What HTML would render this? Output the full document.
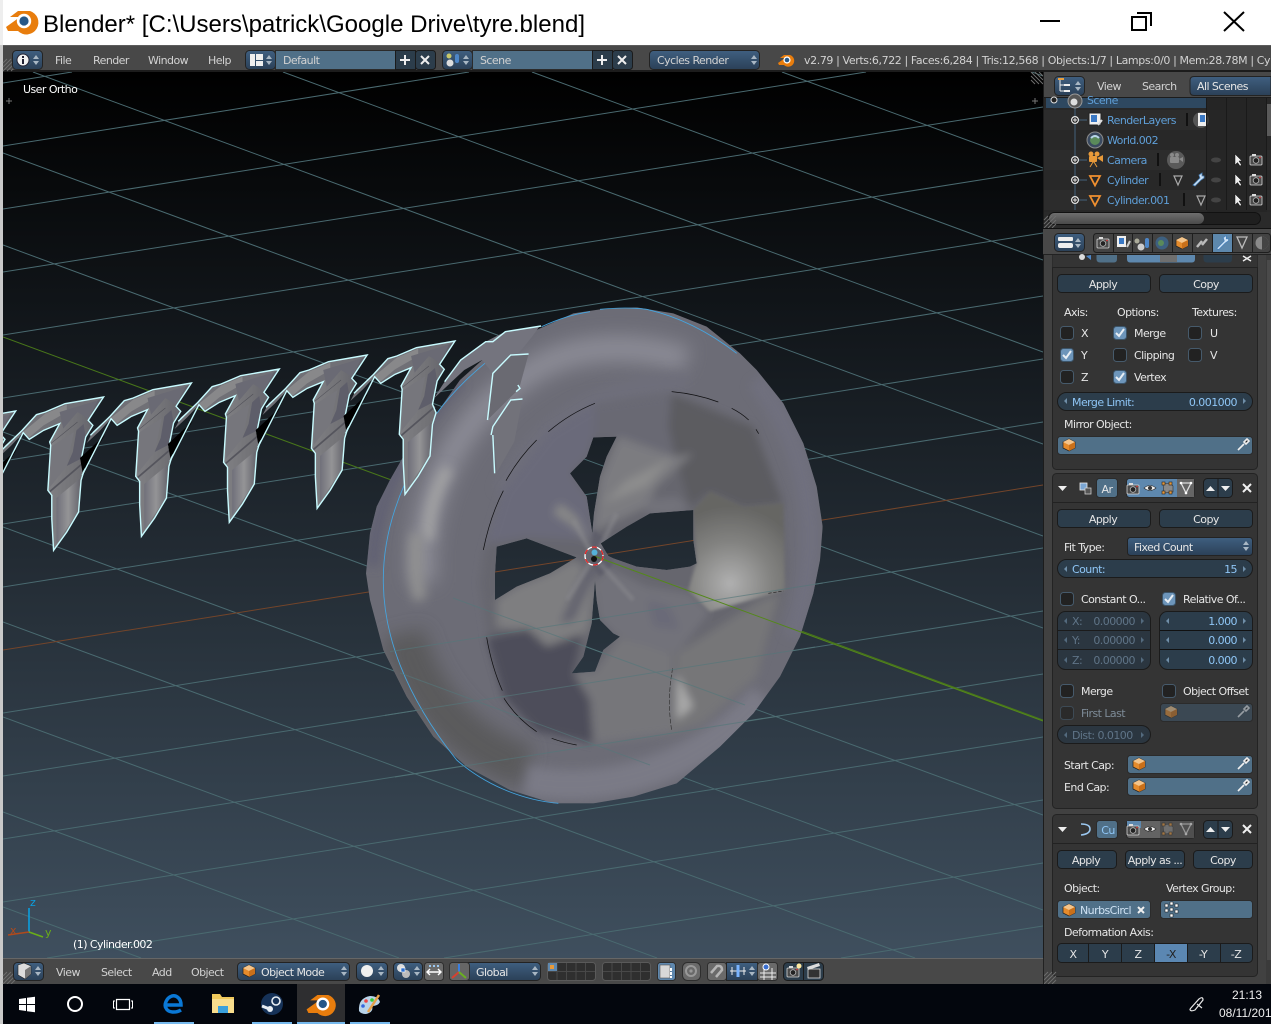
<!DOCTYPE html>
<html><head><meta charset="utf-8"><title>Blender</title>
<style>
html,body{margin:0;padding:0;background:#fff;overflow:hidden;width:1271px;height:1024px}
svg{display:block}
text{font-family:"DejaVu Sans",sans-serif;font-size:11px;letter-spacing:-.55px;fill:#dcdcdc}
.h{fill:#d2d2d2}
.l{fill:#e6e6e6}
.c{text-anchor:middle}
.r{text-anchor:end}
.n{fill:#8fc6f6}
.o{fill:#5f9fd8}
.d{fill:#7d8b97}
.dn{fill:#5f7487}
.w{fill:#fff}
.bt{fill:#2c3d4b;stroke:#1b1b1b}
.fd{fill:#507088;stroke:#2b2b2b}
.ds{fill:#3b4853;stroke:#2b2b2b}
.mn{fill:url(#gm);stroke:#232323}
.ck{fill:#222;stroke:#465a6b}
.cd{fill:#6d95ba;stroke:#3c5468}
.pn{fill:#343434;stroke:#232323}
.ln{stroke:#4a6a70;stroke-width:1;fill:none}
.gy{fill:#6a6a6a;stroke:#2e2e2e}
</style></head><body>
<svg xmlns="http://www.w3.org/2000/svg" width="1271" height="1024" viewBox="0 0 1271 1024">
<defs>
<linearGradient id="gm" x1="0" y1="0" x2="0" y2="1"><stop offset="0" stop-color="#3f5f80"/><stop offset="1" stop-color="#2b4057"/></linearGradient>
<linearGradient id="gv" x1="0" y1="72" x2="0" y2="958" gradientUnits="userSpaceOnUse"><stop offset="0" stop-color="#000"/><stop offset="1" stop-color="#3f4f5e"/></linearGradient>
<linearGradient id="gs" x1="0" y1="0" x2="0" y2="1"><stop offset="0" stop-color="#6e6e6e"/><stop offset="1" stop-color="#4a4a4a"/></linearGradient>
<linearGradient id="gt" x1="0" y1="0" x2="1" y2="0"><stop offset="0" stop-color="#808084"/><stop offset=".5" stop-color="#727276"/><stop offset="1" stop-color="#5c5c66"/></linearGradient>
<linearGradient id="gl" x1="0" y1="0" x2="1" y2="0"><stop offset="0" stop-color="#70707a"/><stop offset=".5" stop-color="#949496"/><stop offset="1" stop-color="#66666e"/></linearGradient>
<radialGradient id="gw" gradientUnits="userSpaceOnUse" cx="1110" cy="850" r="230"><stop offset="0" stop-color="#b0b0b0"/><stop offset=".55" stop-color="#828280"/><stop offset="1" stop-color="#666664"/></radialGradient>
<filter id="b0" filterUnits="userSpaceOnUse" x="-200" y="-200" width="1900" height="2000"><feGaussianBlur stdDeviation="5"/></filter>
<filter id="b1" filterUnits="userSpaceOnUse" x="-200" y="-200" width="1900" height="2000"><feGaussianBlur stdDeviation="13"/></filter>
<filter id="b2" filterUnits="userSpaceOnUse" x="-200" y="-200" width="1900" height="2000"><feGaussianBlur stdDeviation="16"/></filter>
<filter id="b3" filterUnits="userSpaceOnUse" x="-200" y="-200" width="1900" height="2000"><feGaussianBlur stdDeviation="28"/></filter>
<clipPath id="wc"><path clip-rule="evenodd" d="M540,85 L640,40 L720,28 L830,22 L940,40 L1040,80 L1140,160 L1190,210 L1270,310 L1330,430 L1370,560 L1388,680 L1380,780 L1360,880 L1320,1010 L1260,1130 L1180,1240 L1080,1340 L950,1450 L820,1490 L700,1510 L580,1510 L450,1470 L320,1400 L220,1310 L140,1190 L70,1050 L30,900 L18,820 L30,700 L50,620 L90,540 L130,470 L150,440 L230,340 L300,240 L400,150 Z
M700,412 L770,410 L740,470 L720,530 L702,640 L697,700 L680,590 L630,520 L680,470 Z
M722,730 L800,680 L870,640 L1000,630 L1000,720 L1010,790 L990,800 L920,810 L830,800 L760,775 L745,768 Z
M650,772 L500,715 L410,740 L405,820 L405,900 L470,860 L570,820 Z
M705,840 L710,900 L720,960 L760,1000 L780,1010 L730,1050 L705,1115 L635,1120 L670,1070 L695,970 Z"/></clipPath>
<g id="ud"><path d="M-3,-1 L0,-5 L3,-1Z M-3,1 L0,5 L3,1Z" fill="#a9b7c4"/></g>
<path id="al" d="M2,-3 L-1,0 L2,3Z" fill="#6f8ea8"/>
<path id="ar" d="M-2,-3 L1,0 L-2,3Z" fill="#6f8ea8"/>
<path id="tk" d="M3,7 L6,10 L11,3" fill="none" stroke="#e8eef4" stroke-width="2"/>
<g id="cube"><path d="M0,-6 L6,-3 L6,3 L0,6 L-6,3 L-6,-3Z" fill="#e58b2c" stroke="#222" stroke-width=".7"/><path d="M0,-6 L6,-3 L0,0 L-6,-3Z" fill="#f4c48a"/><path d="M0,0 L6,-3 L6,3 L0,6Z" fill="#c9701a"/></g>
<g id="dr"><path d="M-5,5 L1,-1 M1,-3 L4,-6 L6,-4 L3,-1Z" stroke="#f0f0f0" stroke-width="1.600" fill="#222"/></g>
<g id="plus"><circle r="3.400" fill="#222" stroke="#e8e8e8" stroke-width="1.200"/><path d="M-2,0H2M0,-2V2" stroke="#e8e8e8"/></g>
<g id="cam"><rect x="-6" y="-4" width="12" height="9" rx="1" fill="#4a4a4a" stroke="#d8d8d8" stroke-width=".8"/><rect x="-4" y="-6" width="4" height="2" fill="#ddd"/><circle cy=".5" r="2.800" fill="#222" stroke="#bbb" stroke-width=".8"/><circle cx="4" cy="-2.500" r=".8" fill="#e33"/></g>
<g id="eye"><path d="M-6,0 Q0,-5 6,0 Q0,5 -6,0Z" fill="#eee" stroke="#222" stroke-width=".6"/><circle r="2" fill="#333"/></g>
<g id="edt"><path d="M-5,-4 L2,-5 L5,-2 L5,4 L-4,5Z" fill="#8a8a8a" stroke="#333" stroke-width=".6"/><g fill="#e5973a" stroke="#222" stroke-width=".6"><rect x="-6" y="-6" width="3" height="3"/><rect x="1" y="-6" width="3" height="3"/><rect x="-6" y="3" width="3" height="3"/><rect x="1" y="3" width="3" height="3"/></g></g>
<g id="cag"><path d="M-5,-5 L5,-5 L0,5Z" fill="none" stroke="#ddd" stroke-width="1.300"/><circle cx="-5" cy="-5" r="1.300" fill="#fff"/><circle cx="5" cy="-5" r="1.300" fill="#fff"/><circle cy="5" r="1.300" fill="#fff"/></g>
<g id="tri"><path d="M-5,-4 L5,-4 L0,5.500Z" fill="none" stroke="#f09030" stroke-width="1.800"/></g>
<g id="tri2"><path d="M-4,-4 L4,-4 L0,5Z" fill="none" stroke="#a9a9a9" stroke-width="1.200"/></g>
<g id="wr"><path d="M-5,6 L2,-1 L1,-4 L4,-6 L4,-3 L6,-3 L6,-1 L3,1 L-3,7Z" fill="#cfe3f6" stroke="#4c82b8" stroke-width=".8"/></g>
<g id="logo"><path d="M-8,3 L-1,-2 L-6,-2 L-2,-5 L4,-5 A6,6 0 1 1 -2,5 L-7,5Z" fill="#e87d0d"/><circle cx="1" cy="0" r="3.600" fill="#fff"/><circle cx="1" cy="0" r="2.300" fill="#265787"/></g>
<g id="st"><path d="M0,12 L12,0 M0,8 L8,0 M0,4 L4,0 M4,12 L12,4 M8,12 L12,8" stroke="#6e6e6e" fill="none"/></g>

<g id="tooth">
<polygon points="785,262 716,330 723,372" fill="#000"/>
<polygon points="735,285 752,250 800,205 840,158 865,150 920,125 1028,105 985,175 905,185 860,205 820,232 803,212 770,250" fill="#707076"/>
<polygon points="800,212 865,155 925,128 925,150 860,190 820,226" fill="#88888a"/>
<polygon points="1028,105 985,175 998,190 978,225 965,295 975,320 965,355 958,450 925,510 888,565 883,470 883,400 872,385 880,250 877,240 905,185" fill="url(#gt)"/>
<polygon points="905,150 1012,115 985,170 955,150 915,200" fill="#6a6a74"/>
<polygon points="972,186 952,205 942,270 925,312 965,290 978,225" fill="#5e5e6a"/>
<polygon points="896,408 962,350 955,450 925,500 896,545" fill="url(#gl)"/>
<polygon points="945,210 880,255 878,375 925,312" fill="#76767c"/>
<path d="M874,392 L972,302" stroke="#55555d" stroke-width="5" fill="none"/>
<path d="M880,245 L955,180" stroke="#4f4f57" stroke-width="1.500" fill="none"/>
<polyline points="745,262 800,205 840,158 865,150 920,125 1028,105 985,175 998,190 978,225 965,295 975,320 965,355 958,450 925,510 888,565 883,470 883,400 872,385 880,250 877,240 905,185 860,205 820,232 803,212 722,382" fill="none" stroke="#c8fbff" stroke-width="1.400" vector-effect="non-scaling-stroke"/>
</g>
</defs>

<!-- title bar -->
<rect width="1271" height="1024" fill="#fff"/>
<rect x="0" y="0" width="3" height="45" fill="#eeeeee"/>
<use href="#logo" transform="translate(22,21) scale(2)"/>
<text x="43" y="32" style='font-family:"Liberation Sans",sans-serif;font-size:24px;letter-spacing:0;fill:#000' textLength="542" lengthAdjust="spacingAndGlyphs">Blender* [C:\Users\patrick\Google Drive\tyre.blend]</text>
<path d="M1040,21 H1060" stroke="#000" stroke-width="2"/>
<path d="M1137,13 H1151 V26 M1132,17 H1146 V30 H1132Z" fill="none" stroke="#000" stroke-width="2"/>
<path d="M1224,12 L1244,31 M1244,12 L1224,31" stroke="#000" stroke-width="2"/>

<rect x="0" y="45" width="1271" height="979" fill="#3f3f3f"/>
<rect x="0" y="45" width="3" height="979" fill="#c9c9c9"/>

<!-- top header -->
<rect x="3" y="45" width="1268" height="26" fill="#484848"/>
<rect x="3" y="45" width="1268" height="1" fill="#5c5c5c"/>
<rect x="3" y="70" width="1268" height="2" fill="#1c1c1c"/>
<use href="#st" x="3" y="59"/>
<rect x="12.500" y="50.500" width="30" height="19" rx="4" class="mn"/>
<circle cx="23" cy="60" r="6" fill="#f2f2f2" stroke="#223" stroke-width="1"/>
<rect x="22" y="59" width="2" height="5" fill="#223"/><rect x="22" y="56" width="2" height="2" fill="#223"/>
<use href="#ud" x="36" y="60"/>
<text x="55" y="64" class="h">File</text>
<text x="93" y="64" class="h">Render</text>
<text x="148" y="64" class="h">Window</text>
<text x="208" y="64" class="h">Help</text>
<rect x="245.500" y="50.500" width="30" height="19" rx="4" class="mn"/>
<rect x="250" y="54" width="5" height="12" fill="#eee"/><rect x="256" y="54" width="7" height="6" fill="#eee"/><rect x="256" y="61" width="7" height="5" fill="#eee"/>
<use href="#ud" x="269" y="60"/>
<rect x="275.500" y="50.500" width="120" height="19" class="fd"/>
<text x="283" y="64" class="h">Default</text>
<rect x="395.500" y="50.500" width="20" height="19" fill="#2c3d4b" stroke="#1b1b1b"/>
<rect x="415.500" y="50.500" width="20" height="19" rx="3" fill="#2c3d4b" stroke="#1b1b1b"/>
<path d="M400,60 H410 M405,55 V65" stroke="#eee" stroke-width="2"/>
<path d="M421,56 L429,64 M429,56 L421,64" stroke="#eee" stroke-width="2"/>
<rect x="442.500" y="50.500" width="30" height="19" rx="4" class="mn"/>
<circle cx="449" cy="56" r="2.500" fill="#c8c86a"/><circle cx="450" cy="63" r="3.500" fill="#ddd"/><rect x="455" y="54" width="4" height="9" rx="2" fill="#4d86c8"/>
<use href="#ud" x="466" y="60"/>
<rect x="472.500" y="50.500" width="120" height="19" class="fd"/>
<text x="480" y="64" class="h">Scene</text>
<rect x="592.500" y="50.500" width="20" height="19" fill="#2c3d4b" stroke="#1b1b1b"/>
<rect x="612.500" y="50.500" width="20" height="19" rx="3" fill="#2c3d4b" stroke="#1b1b1b"/>
<path d="M597,60 H607 M602,55 V65" stroke="#eee" stroke-width="2"/>
<path d="M618,56 L626,64 M626,56 L618,64" stroke="#eee" stroke-width="2"/>
<rect x="649.500" y="50.500" width="110" height="19" rx="4" class="mn"/>
<text x="657" y="64" class="h">Cycles Render</text>
<use href="#ud" x="754" y="60"/>
<use href="#logo" x="786" y="60"/>
<text x="804" y="64" class="h" textLength="466">v2.79 | Verts:6,722 | Faces:6,284 | Tris:12,568 | Objects:1/7 | Lamps:0/0 | Mem:28.78M | Cy</text>

<!-- 3D viewport -->
<svg x="3" y="72" width="1040" height="886" viewBox="3 72 1040 886">
<rect x="3" y="72" width="1040" height="886" fill="url(#gv)"/>
<g class="ln">
<path d="M3,83L72,72M3,146L469,72M3,209L866,72M3,272L1043,107M3,335L1043,170M3,398L1043,233M3,461L1043,296M3,524L1043,359M3,587L1043,422M3,713L1043,548M3,776L1043,611M3,839L1043,674M3,902L1043,737M47,958L1043,800M444,958L1043,863M841,958L1043,926"/>
<path d="M3,432L1043,815M3,527L1043,910M3,622L915,958M3,717L657,958M3,812L399,958M3,907L141,958M3,245L1043,628M3,153L1043,536M33,72L1043,444M283,72L1043,352M532,72L1043,260M782,72L1043,168M1032,72L1043,76"/>
</g>
<path d="M3,650L1043,485" stroke="#74452a" stroke-width="1"/>
<path d="M3,337L1043,720" stroke="#48761a" stroke-width="1"/>

<!-- wheel -->
<g transform="translate(360,300) scale(.33333)">
<g clip-path="url(#wc)">
<rect x="0" y="0" width="1410" height="1530" fill="#6c6c76"/>
<path d="M130,1000 C170,1170 300,1340 500,1400" stroke="#5a5a5c" stroke-width="130" fill="none" filter="url(#b3)"/>
<path d="M190,850 C170,620 270,360 520,210 C650,130 830,130 980,180" stroke="#8a8a94" stroke-width="80" fill="none" filter="url(#b3)"/>
<path d="M205,720 C205,640 225,570 265,505" stroke="#a5a5a5" stroke-width="32" fill="none" filter="url(#b2)"/>
<path d="M170,700 C165,780 165,840 180,900" stroke="#919191" stroke-width="40" fill="none" filter="url(#b2)"/>
<path d="M500,1440 C720,1490 1020,1410 1210,1190" stroke="#7a7a86" stroke-width="90" fill="none" filter="url(#b2)"/>
<path d="M1190,240 C1340,430 1400,700 1300,1010" stroke="#70707e" stroke-width="60" fill="none" filter="url(#b2)"/>
<path d="M40,800 C40,600 160,380 300,240" stroke="#5e5e72" stroke-width="34" fill="none" filter="url(#b2)"/>
<path d="M430,580 C500,400 720,240 980,250" stroke="#6e6e7a" stroke-width="60" fill="none" filter="url(#b2)"/>
<!-- inner -->
<g filter="url(#b1)">
<polygon points="360,850 372,760 430,570 565,395 705,310 935,280 1180,380 1270,610 1280,800 1270,900 1190,1130 1030,1270 930,1300 700,1330 530,1295 430,1190 385,1020" fill="#66666e"/>
<polygon points="935,280 1180,380 1270,610 1150,620 1050,575 990,620 945,470 925,380" fill="#5c5c60"/>
<polygon points="705,310 935,280 925,380 945,470 770,410 700,410" fill="#696973"/>
<polygon points="775,410 945,470 1000,460 890,560 860,620 700,695 720,540" fill="#7c7c80"/>
<polygon points="800,540 940,470 860,560 730,610" fill="#8d8d8d"/>
<polygon points="860,600 950,590 990,625 930,650 860,640" fill="#72727a"/>
<polygon points="705,310 700,410 680,470 630,520 690,600 695,720 500,710 380,730 430,570 565,395" fill="#6a6a7a"/>
<polygon points="580,640 600,610 650,650 690,730 640,680" fill="#888888"/>
<polygon points="640,780 705,820 690,970 650,1070 560,1040 520,1000 410,980 410,900 470,860 570,820" fill="#7e7e80"/>
<polygon points="680,800 705,820 640,960 600,970" fill="#61616d"/>
<polygon points="380,1015 500,985 560,1040 670,1000 640,1120 700,1200 700,1330 530,1295 430,1190" fill="#4e4e5a"/>
<polygon points="640,1120 705,1115 780,1010 870,1040 940,1060 935,1300 700,1330 690,1200" fill="#76767a"/>
<polygon points="740,800 860,860 990,880 1050,935 1030,960 950,1060 870,1040 760,1000 715,950 705,850" fill="#72727a"/>
<polygon points="860,900 930,920 960,990 880,980" fill="#6a6a78"/>
<polygon points="950,1060 1200,900 1260,880 1190,1130 1030,1270 935,1300" fill="#767678"/>
<polygon points="950,1120 1000,1220 950,1260" fill="#a8a8a8"/>
</g>
<polygon points="1000,630 1050,575 1150,620 1270,610 1275,870 1050,935 985,870 1005,800 1010,790" fill="url(#gw)" filter="url(#b0)"/>
<g fill="#5f5f6a" filter="url(#b0)"><polygon points="740,720 700,690 690,790 720,830 760,790"/></g>
<path d="M720,745 L770,640 M690,750 L640,660 M690,790 L620,900 M720,790 L820,900" stroke="#8b8b90" stroke-width="14" filter="url(#b0)" opacity=".5"/>
</g>
<!-- black cracks -->
<g fill="none" stroke="#000" stroke-width="2.200" opacity=".85">
<path d="M565,395 Q630,340 705,310"/><path d="M530,420 Q475,475 438,542"/><path d="M430,572 Q390,650 370,750"/><path d="M380,1012 Q395,1100 427,1172"/><path d="M432,1195 Q470,1255 530,1295"/><path d="M575,1315 Q610,1328 650,1335"/><path d="M935,275 Q1010,282 1075,306"/><path d="M1115,325 Q1145,340 1166,360"/><path d="M1188,388 L1196,401"/>
</g>
<path d="M938,1105 Q920,1200 935,1290" stroke="#333" stroke-width="2" fill="none" stroke-dasharray="14 5"/>
<path d="M1225,880 L1270,873" stroke="#222" stroke-width="2" stroke-dasharray="10 5"/>
<!-- blue circle arcs -->
<g fill="none" stroke="#45a5e0" stroke-width="2.600">
<path d="M135,550 C95,640 68,740 70,850 C72,1000 130,1180 290,1380 C370,1450 480,1500 595,1510"/>
<path d="M230,340 C290,260 350,210 410,160"/><path d="M545,80 Q620,45 690,35"/><path d="M720,28 Q800,20 860,28 Q1000,60 1130,160"/>
</g>
</g>

<!-- overlaid faint lines -->
<g stroke="#55777a" stroke-width="1" opacity=".65" fill="none">
<path d="M390,651.600L823,583M385,715.400L815,647M395,777L780,716"/>
<path d="M453,598L745,705M400,673L650,765"/>
</g>
<path d="M594,556L1043,721" stroke="#54881a" stroke-width="1"/>

<!-- teeth -->
<g transform="translate(0,320) scale(.35714,.33333)">
<use href="#tooth" transform="translate(-984,168)"/>
<use href="#tooth" transform="translate(-738,126)"/>
<use href="#tooth" transform="translate(-492,84)"/>
<use href="#tooth" transform="translate(-246,42)"/>
<use href="#tooth"/>
<use href="#tooth" transform="translate(246,-42)"/>
<polygon points="1215,235 1245,185 1290,120 1360,65 1415,35 1510,20 1490,50 1460,90 1380,160 1350,120 1300,150" fill="#74747e"/>
<polygon points="1380,160 1430,105 1480,102 1455,200 1450,210 1365,300" fill="#6a6a72"/>
<polygon points="1380,320 1430,240 1463,237 1440,365 1392,455 1385,370" fill="#72727a"/>
<g fill="none" stroke="#c8fbff" stroke-width="1.400">
<polyline vector-effect="non-scaling-stroke" points="1245,185 1290,120 1360,65 1380,65 1415,35 1515,18"/>
<polyline vector-effect="non-scaling-stroke" points="1365,300 1380,160 1430,105 1480,102"/>
<polyline vector-effect="non-scaling-stroke" points="1450,195 1456,205 1445,215"/>
<polyline vector-effect="non-scaling-stroke" points="1375,345 1380,320 1430,240 1463,237"/>
<polyline vector-effect="non-scaling-stroke" points="1385,460 1380,345"/>
</g>
</g>

<!-- 3D cursor -->
<circle cx="594" cy="556" r="9" fill="none" stroke="#fff" stroke-width="1.300"/>
<circle cx="594" cy="556" r="9" fill="none" stroke="#e02020" stroke-width="1.300" stroke-dasharray="5 5"/>
<circle cx="594.500" cy="552.500" r="3" fill="#55b0d8"/>
<circle cx="594" cy="559" r="3" fill="#111"/>

<text x="23" y="93" class="w">User Ortho</text>
<text x="73" y="948" class="w">(1) Cylinder.002</text>
<path d="M29,932 V908" stroke="#0a9fe0" stroke-width="1.600"/>
<path d="M29,932 L8,935" stroke="#b04a1c" stroke-width="1.600"/>
<path d="M29,932 L43,937" stroke="#6aae18" stroke-width="1.600"/>
<text x="30" y="906" style="fill:#0a9fe0">z</text>
<text x="10" y="934" style="fill:#b04a1c">x</text>
<text x="45" y="936" style="fill:#6aae18">y</text>
<path d="M6,101H12M9,98V104M1032,101H1038M1035,98V104" stroke="#777"/>
<use href="#st" x="1031" y="72" transform="rotate(90 1037 78)"/>
</svg>

<!-- outliner -->
<rect x="1043" y="72" width="228" height="156" fill="#2a2a2a"/>
<rect x="1044" y="98" width="227" height="114" fill="#282828"/>
<rect x="1044" y="110" width="227" height="20" fill="#2c2c2c"/>
<rect x="1044" y="150" width="227" height="20" fill="#2c2c2c"/>
<rect x="1044" y="190" width="227" height="20" fill="#2c2c2c"/>
<rect x="1046" y="98" width="161" height="10" fill="#2e4860"/>
<rect x="1043" y="72" width="228" height="26" fill="#484848"/>
<rect x="1043" y="97" width="228" height="1" fill="#1c1c1c"/>
<rect x="1043" y="72" width="1" height="156" fill="#1c1c1c"/>
<rect x="1054.500" y="76.500" width="30" height="19" rx="4" class="mn"/>
<rect x="1058" y="78" width="6" height="2" fill="#e8a040"/><path d="M1060,80 V91 M1060,85 H1064 M1060,91 H1064" stroke="#eee"/><rect x="1064" y="84" width="6" height="2" fill="#eee"/><rect x="1064" y="90" width="6" height="2" fill="#eee"/>
<use href="#ud" x="1078" y="86"/>
<text x="1097" y="90" class="h">View</text>
<text x="1142" y="90" class="h">Search</text>
<path d="M1194,76.500 H1271 V95.500 H1194 Q1190,95.500 1190,91.500 V80.500 Q1190,76.500 1194,76.500Z" fill="url(#gm)" stroke="#232323"/>
<text x="1197" y="90" class="l">All Scenes</text>

<path d="M1075,104 V210" stroke="#44627d"/>
<path d="M1078,120H1087M1078,160H1087M1078,180H1087M1078,200H1087" stroke="#44627d"/>
<circle cx="1054" cy="100" r="3" fill="#222" stroke="#ddd"/>
<circle cx="1075" cy="101" r="7" fill="#555" stroke="#999"/><circle cx="1074" cy="102" r="3.500" fill="#ddd"/>
<text x="1087" y="104" class="o">Scene</text>
<use href="#plus" x="1075" y="120"/><use href="#plus" x="1075" y="160"/><use href="#plus" x="1075" y="180"/><use href="#plus" x="1075" y="200"/>
<rect x="1089" y="113" width="12" height="12" fill="#f0f0f0" stroke="#222"/><rect x="1091" y="115" width="6" height="7" fill="#3a78c4"/><path d="M1098,125 L1102,120" stroke="#ddd" stroke-width="2"/>
<text x="1107" y="124" class="o">RenderLayers</text>
<rect x="1186" y="113" width="2" height="13" fill="#111"/>
<circle cx="1201" cy="120" r="8" fill="#555"/><rect x="1198" y="113" width="9" height="13" fill="#eee"/><rect x="1200" y="115" width="5" height="7" fill="#3a78c4"/>
<circle cx="1095" cy="140" r="8" fill="#3a4a60" stroke="#8a8a8a"/><circle cx="1095" cy="140" r="5" fill="#5a8a5a"/><path d="M1091,138 Q1095,134 1099,138" stroke="#b8d4e8" stroke-width="2" fill="none"/>
<text x="1107" y="144" class="o">World.002</text>
<g fill="#e89a3a"><rect x="1089" y="156" width="8" height="6" rx="1"/><circle cx="1091" cy="154" r="2.500"/><circle cx="1097" cy="154" r="2.500"/><path d="M1097,158 L1103,155 V162Z"/><path d="M1090,167 L1093,162 H1094 L1097,167" fill="none" stroke="#e89a3a"/></g>
<text x="1107" y="164" class="o">Camera</text>
<rect x="1157" y="153" width="2" height="13" fill="#111"/>
<circle cx="1176" cy="160" r="9" fill="#5a5a5a"/><g fill="#8a8a8a"><rect x="1170" y="157" width="9" height="6" rx="1"/><circle cx="1172" cy="155" r="2"/><circle cx="1177" cy="155" r="2"/><path d="M1179,159 L1183,157 V162Z"/></g>
<use href="#tri" x="1095" y="180"/>
<text x="1107" y="184" class="o">Cylinder</text>
<rect x="1159" y="173" width="2" height="13" fill="#111"/>
<use href="#tri2" x="1178" y="180"/>
<use href="#wr" x="1198" y="179"/>
<use href="#tri" x="1095" y="200"/>
<text x="1107" y="204" class="o">Cylinder.001</text>
<rect x="1183" y="193" width="2" height="13" fill="#111"/>
<use href="#tri2" x="1201" y="200"/>
<rect x="1207" y="98" width="60" height="114" fill="#222" opacity=".55"/>
<path d="M1206.500,98V210M1226.500,98V210M1246.500,98V210M1266.500,98V210" stroke="#1a1a1a"/>
<g fill="#444"><ellipse cx="1216" cy="160" rx="5" ry="2.500"/><ellipse cx="1216" cy="180" rx="5" ry="2.500"/><ellipse cx="1216" cy="200" rx="5" ry="2.500"/></g>
<g fill="#eee" stroke="#111" stroke-width=".5"><path d="M1235,154 L1235,165 L1237.500,162.500 L1240,166 L1241.500,165 L1239,161 L1242,161Z"/><path d="M1235,174 L1235,185 L1237.500,182.500 L1240,186 L1241.500,185 L1239,181 L1242,181Z"/><path d="M1235,194 L1235,205 L1237.500,202.500 L1240,206 L1241.500,205 L1239,201 L1242,201Z"/></g>
<use href="#cam" x="1256" y="160"/><use href="#cam" x="1256" y="180"/><use href="#cam" x="1256" y="200"/>
<rect x="1267" y="104" width="4" height="32" fill="#5a5a5a"/>
<rect x="1048.500" y="212.500" width="212" height="12" rx="6" fill="#1f1f1f" stroke="#111"/>
<rect x="1049" y="213" width="155" height="11" rx="5.500" fill="url(#gs)"/>
<use href="#st" x="1044" y="216"/>
<rect x="1043" y="228" width="228" height="1" fill="#111"/>

<!-- properties -->
<rect x="1043" y="229" width="228" height="755" fill="#414141"/>
<rect x="1043" y="229" width="1" height="755" fill="#1c1c1c"/>
<rect x="1266" y="229" width="5" height="755" fill="#3a3a3a"/>
<rect x="1052.500" y="248.500" width="205" height="221" rx="4" class="pn"/>
<rect x="1043" y="229" width="228" height="26" fill="#484848"/>
<rect x="1043" y="254" width="228" height="1" fill="#222"/>
<rect x="1054.500" y="233.500" width="30" height="18" rx="4" class="mn"/>
<rect x="1058" y="237" width="15" height="4" rx="1" fill="#eee"/><rect x="1058" y="243" width="15" height="5" rx="2" fill="#eee"/>
<use href="#ud" x="1078" y="243"/>
<rect x="1093.500" y="233.500" width="177" height="19" rx="3" fill="#434343" stroke="#1e1e1e"/>
<path d="M1113.500,234V252M1132.500,234V252M1152.500,234V252M1172.500,234V252M1192.500,234V252M1212.500,234V252M1232.500,234V252M1252.500,234V252" stroke="#1e1e1e"/>
<rect x="1213" y="234" width="19" height="18" fill="#5d88ad"/>
<use href="#cam" x="1103" y="243"/>
<rect x="1117" y="236" width="9" height="11" fill="#eee"/><rect x="1119" y="238" width="5" height="6" fill="#3a78c4"/><path d="M1127,247 L1130,241" stroke="#ccc" stroke-width="2"/>
<circle cx="1137" cy="241" r="2.500" fill="#aa9"/><circle cx="1141" cy="247" r="3.500" fill="#ccc"/><rect x="1145" y="238" width="4" height="10" rx="2" fill="#4d86c8"/>
<circle cx="1162" cy="243" r="6.500" fill="#3d6080"/><circle cx="1161" cy="243" r="3" fill="#5a8a5a"/>
<use href="#cube" x="1182" y="243"/>
<path d="M1197,247 L1202,241 M1202,245 L1207,239" stroke="#bbb" stroke-width="2.500" fill="none"/>
<use href="#wr" transform="translate(1222,242) scale(1.100)"/>
<path d="M1237,237 L1247,237 L1242,248Z" fill="none" stroke="#bbb" stroke-width="1.300"/>
<circle cx="1262" cy="243" r="6.500" fill="#8a8a8a"/><path d="M1262,236.500 A6.500,6.500 0 0 1 1262,249.500Z" fill="#444"/>

<!-- clipped header strip of panel 1 -->
<rect x="1052.500" y="255" width="205" height="12" fill="#343434"/>
<path d="M1053,267.500H1257" stroke="#222"/>
<circle cx="1082" cy="257" r="3" fill="#ddd"/><path d="M1086,256 L1091,255 V260Z" fill="#4d86c8"/>
<path d="M1096.500,255 V259 Q1096.500,262.500 1100,262.500 H1114 Q1117,262.500 1117,259 V255Z" fill="#507088"/>
<path d="M1127,255 V259 Q1127,262.500 1130,262.500 H1192 Q1195,262.500 1195,259 V255Z" fill="#5e88ae"/>
<rect x="1160" y="255" width="17" height="7" fill="#6f6f6f"/>
<path d="M1203.500,255 V259 Q1203.500,262.500 1207,262.500 H1229 Q1232,262.500 1232,259 V255Z" fill="#2c3d4b"/>
<path d="M1243,256L1251,261M1251,256L1243,261" stroke="#eee" stroke-width="1.500"/>

<!-- panel 1 content -->
<rect x="1057.500" y="274.500" width="93" height="18" rx="4" class="bt"/>
<text x="1103" y="288" class="c l">Apply</text>
<rect x="1159.500" y="274.500" width="93" height="18" rx="4" class="bt"/>
<text x="1206" y="288" class="c l">Copy</text>
<text x="1064" y="316" class="l">Axis:</text>
<text x="1117" y="316" class="l">Options:</text>
<text x="1192" y="316" class="l">Textures:</text>
<rect x="1060.500" y="326.500" width="13" height="13" rx="3" class="ck"/><text x="1081" y="337" class="l">X</text>
<rect x="1113.500" y="326.500" width="13" height="13" rx="3" class="cd"/><use href="#tk" x="1113" y="326"/><text x="1134" y="337" class="l">Merge</text>
<rect x="1188.500" y="326.500" width="13" height="13" rx="3" class="ck"/><text x="1210" y="337" class="l">U</text>
<rect x="1060.500" y="348.500" width="13" height="13" rx="3" class="cd"/><use href="#tk" x="1060" y="348"/><text x="1081" y="359" class="l">Y</text>
<rect x="1113.500" y="348.500" width="13" height="13" rx="3" class="ck"/><text x="1134" y="359" class="l">Clipping</text>
<rect x="1188.500" y="348.500" width="13" height="13" rx="3" class="ck"/><text x="1210" y="359" class="l">V</text>
<rect x="1060.500" y="370.500" width="13" height="13" rx="3" class="ck"/><text x="1081" y="381" class="l">Z</text>
<rect x="1113.500" y="370.500" width="13" height="13" rx="3" class="cd"/><use href="#tk" x="1113" y="370"/><text x="1134" y="381" class="l">Vertex</text>
<rect x="1057.500" y="392.500" width="195" height="18" rx="9" class="bt"/>
<use href="#al" x="1065" y="401"/><use href="#ar" x="1245" y="401"/>
<text x="1072" y="406" class="n">Merge Limit:</text><text x="1237" y="406" class="r n">0.001000</text>
<text x="1064" y="428" class="l">Mirror Object:</text>
<rect x="1057.500" y="436.500" width="195" height="18" rx="3" class="fd"/>
<use href="#cube" x="1069" y="445"/><use href="#dr" x="1243" y="445"/>

<!-- panel 2 -->
<rect x="1052.500" y="473.500" width="205" height="335" rx="4" class="pn"/>
<path d="M1053,502.500H1257" stroke="#222"/>
<path d="M1058,486 H1067 L1062.500,491Z" fill="#eee"/>
<rect x="1080" y="483" width="7" height="7" fill="#7aa6d4" stroke="#eee" stroke-width=".8"/><rect x="1085" y="488" width="6" height="6" fill="#555" stroke="#ccc" stroke-width=".8"/>
<rect x="1096.500" y="478.500" width="21" height="19" rx="3" class="fd"/>
<text x="1107" y="493" class="c l">Ar</text>
<rect x="1126.500" y="478.500" width="68" height="19" rx="3" fill="#5e88ae" stroke="#2a2a2a"/>
<rect x="1177" y="479" width="17" height="18" fill="#666"/>
<use href="#cam" x="1133" y="489"/><use href="#eye" x="1150" y="488"/><use href="#edt" x="1168" y="488"/><use href="#cag" x="1186" y="488"/>
<rect x="1203.500" y="478.500" width="29" height="19" rx="4" class="bt"/><path d="M1218,479V497" stroke="#1b1b1b"/>
<path d="M1206,491 H1215 L1210.500,486Z M1221,486 H1230 L1225.500,491Z" fill="#eee"/>
<path d="M1243,484 L1251,492 M1251,484 L1243,492" stroke="#f0f0f0" stroke-width="2"/>
<rect x="1057.500" y="509.500" width="93" height="18" rx="4" class="bt"/>
<text x="1103" y="523" class="c l">Apply</text>
<rect x="1159.500" y="509.500" width="93" height="18" rx="4" class="bt"/>
<text x="1206" y="523" class="c l">Copy</text>
<text x="1064" y="551" class="l">Fit Type:</text>
<rect x="1127.500" y="537.500" width="125" height="18" rx="3" class="mn"/>
<text x="1134" y="551" class="l">Fixed Count</text><use href="#ud" x="1246" y="546"/>
<rect x="1057.500" y="559.500" width="195" height="18" rx="9" class="bt"/>
<use href="#al" x="1065" y="569"/><use href="#ar" x="1245" y="569"/>
<text x="1072" y="573" class="n">Count:</text><text x="1237" y="573" class="r n">15</text>
<rect x="1060.500" y="592.500" width="13" height="13" rx="3" class="ck"/><text x="1081" y="603" class="l">Constant O...</text>
<rect x="1162.500" y="592.500" width="13" height="13" rx="3" class="cd"/><use href="#tk" x="1162" y="592"/><text x="1183" y="603" class="l">Relative Of...</text>
<rect x="1057.500" y="611.500" width="93" height="58" rx="8" class="bt" style="fill:#2b3640"/>
<path d="M1058,630.500H1150M1058,649.500H1150" stroke="#1b1b1b"/>
<g opacity=".6"><use href="#al" x="1065" y="621"/><use href="#al" x="1065" y="640"/><use href="#al" x="1065" y="660"/><use href="#ar" x="1143" y="621"/><use href="#ar" x="1143" y="640"/><use href="#ar" x="1143" y="660"/></g>
<text x="1072" y="625" class="dn">X:</text><text x="1135" y="625" class="r dn">0.00000</text>
<text x="1072" y="644" class="dn">Y:</text><text x="1135" y="644" class="r dn">0.00000</text>
<text x="1072" y="664" class="dn">Z:</text><text x="1135" y="664" class="r dn">0.00000</text>
<rect x="1159.500" y="611.500" width="93" height="58" rx="8" class="bt"/>
<path d="M1160,630.500H1252M1160,649.500H1252" stroke="#111"/>
<use href="#al" x="1167" y="621"/><use href="#al" x="1167" y="640"/><use href="#al" x="1167" y="660"/><use href="#ar" x="1245" y="621"/><use href="#ar" x="1245" y="640"/><use href="#ar" x="1245" y="660"/>
<text x="1237" y="625" class="r n">1.000</text><text x="1237" y="644" class="r n">0.000</text><text x="1237" y="664" class="r n">0.000</text>
<rect x="1060.500" y="684.500" width="13" height="13" rx="3" class="ck"/><text x="1081" y="695" class="l">Merge</text>
<rect x="1162.500" y="684.500" width="13" height="13" rx="3" class="ck"/><text x="1183" y="695" class="l">Object Offset</text>
<rect x="1060.500" y="706.500" width="13" height="13" rx="3" fill="#2a2a2a" stroke="#3d4a55"/><text x="1081" y="717" class="d">First Last</text>
<rect x="1160.500" y="703.500" width="92" height="18" rx="3" class="ds"/>
<use href="#cube" x="1171" y="712" opacity=".55"/><use href="#dr" x="1243" y="712" opacity=".5"/>
<rect x="1057.500" y="725.500" width="93" height="18" rx="9" class="bt" style="fill:#2b3640"/>
<g opacity=".6"><use href="#al" x="1065" y="735"/><use href="#ar" x="1143" y="735"/></g>
<text x="1072" y="739" class="dn">Dist: 0.0100</text>
<text x="1064" y="769" class="l">Start Cap:</text>
<rect x="1127.500" y="755.500" width="125" height="18" rx="3" class="fd"/>
<use href="#cube" x="1139" y="764"/><use href="#dr" x="1243" y="764"/>
<text x="1064" y="791" class="l">End Cap:</text>
<rect x="1127.500" y="777.500" width="125" height="18" rx="3" class="fd"/>
<use href="#cube" x="1139" y="786"/><use href="#dr" x="1243" y="786"/>

<!-- panel 3 -->
<rect x="1052.500" y="814.500" width="205" height="162" rx="4" class="pn"/>
<path d="M1053,843.500H1257" stroke="#222"/>
<path d="M1058,827 H1067 L1062.500,832Z" fill="#eee"/>
<path d="M1081,824 Q1090,824 1090,829 Q1090,834 1081,835" fill="none" stroke="#9cc8f0" stroke-width="1.600"/>
<rect x="1096.500" y="820.500" width="21" height="18" rx="3" class="fd"/>
<text x="1108" y="834" class="c n">Cu</text>
<rect x="1126.500" y="820.500" width="68" height="18" rx="3" fill="#636363" stroke="#2a2a2a"/>
<rect x="1127" y="821" width="14" height="7" fill="#5e88ae"/>
<rect x="1160" y="821" width="34" height="17" fill="#4f4f4f"/>
<use href="#cam" x="1133" y="830"/><use href="#eye" x="1150" y="829"/><use href="#edt" x="1168" y="829" opacity=".55"/><use href="#cag" x="1186" y="829" opacity=".5"/>
<rect x="1203.500" y="820.500" width="29" height="18" rx="4" class="bt"/><path d="M1218,821V838" stroke="#1b1b1b"/>
<path d="M1206,832 H1215 L1210.500,827Z M1221,827 H1230 L1225.500,832Z" fill="#eee"/>
<path d="M1243,825 L1251,833 M1251,825 L1243,833" stroke="#f0f0f0" stroke-width="2"/>
<rect x="1057.500" y="850.500" width="59" height="18" rx="4" class="bt"/><text x="1086" y="864" class="c l">Apply</text>
<rect x="1125.500" y="850.500" width="59" height="18" rx="4" class="bt"/><text x="1155" y="864" class="c l">Apply as ...</text>
<rect x="1193.500" y="850.500" width="59" height="18" rx="4" class="bt"/><text x="1223" y="864" class="c l">Copy</text>
<text x="1064" y="892" class="l">Object:</text>
<text x="1166" y="892" class="l">Vertex Group:</text>
<rect x="1057.500" y="900.500" width="93" height="18" rx="3" class="fd"/>
<use href="#cube" x="1069" y="910"/>
<text x="1080" y="914" style="fill:#cfe2f3">NurbsCircl</text>
<path d="M1138,907 L1144,913 M1144,907 L1138,913" stroke="#f0f0f0" stroke-width="2"/>
<rect x="1160.500" y="900.500" width="92" height="18" rx="3" class="fd"/>
<g fill="#fff" stroke="#111" stroke-width=".5"><rect x="1165" y="904" width="3" height="3"/><rect x="1170" y="902" width="3" height="3"/><rect x="1165" y="909" width="3" height="3"/><rect x="1170" y="908" width="3" height="3"/><rect x="1175" y="904" width="3" height="3"/><rect x="1175" y="910" width="3" height="3"/><rect x="1170" y="914" width="3" height="3"/></g>
<text x="1064" y="936" class="l">Deformation Axis:</text>
<rect x="1057.500" y="943.500" width="195" height="19" rx="4" class="bt"/>
<rect x="1155" y="944" width="32" height="18" fill="#5b87b2"/>
<path d="M1088.500,944V962M1121.500,944V962M1154.500,944V962M1187.500,944V962M1220.500,944V962" stroke="#1b1b1b"/>
<text x="1073" y="958" class="c l">X</text><text x="1105" y="958" class="c l">Y</text><text x="1138" y="958" class="c l">Z</text><text x="1171" y="958" class="c" style="fill:#222">-X</text><text x="1203" y="958" class="c l">-Y</text><text x="1236" y="958" class="c l">-Z</text>
<use href="#st" x="1044" y="972"/>
<rect x="1267" y="260" width="4" height="700" fill="#4a4a4a"/>

<!-- bottom header -->
<rect x="3" y="958" width="1040" height="26" fill="#484848"/>
<rect x="3" y="958" width="1040" height="1" fill="#666"/>
<rect x="1043" y="958" width="1" height="26" fill="#222"/>
<use href="#st" x="3" y="972"/>
<rect x="13.500" y="962.500" width="30" height="18" rx="4" class="mn"/>
<path d="M18,965 L24,963 L31,966 L31,974 L25,979 L18,975Z" fill="#ddd" stroke="#222" stroke-width=".6"/><path d="M25,970 L31,966 L31,974 L25,979Z" fill="#777"/>
<use href="#ud" x="38" y="971"/>
<text x="56" y="976" class="h">View</text>
<text x="101" y="976" class="h">Select</text>
<text x="152" y="976" class="h">Add</text>
<text x="191" y="976" class="h">Object</text>
<rect x="237.500" y="962.500" width="112" height="18" rx="4" class="mn"/>
<use href="#cube" x="249" y="971"/>
<text x="261" y="976" class="l">Object Mode</text>
<use href="#ud" x="344" y="971"/>
<rect x="356.500" y="962.500" width="31" height="18" rx="4" class="mn"/>
<circle cx="367" cy="971" r="6" fill="#f0f0f0"/><use href="#ud" x="381" y="971"/>
<rect x="393.500" y="962.500" width="29" height="18" rx="4" class="mn"/>
<circle cx="401" cy="968" r="4" fill="#ddd"/><circle cx="406" cy="974" r="4" fill="#bbb"/><rect x="401" y="968" width="4" height="4" fill="#2a6fd0" stroke="#fff" stroke-width=".6"/><use href="#ud" x="417" y="971"/>
<rect x="424.500" y="962.500" width="19" height="18" rx="3" class="gy"/>
<path d="M427,972 H441 M430,969 L427,972 L430,975 M438,969 L441,972 L438,975" fill="none" stroke="#fff" stroke-width="1.400"/>
<path d="M429,966h2M433,966h2M437,966h2" stroke="#9cc8f0" stroke-width="2"/>
<rect x="449.500" y="962.500" width="91" height="18" rx="4" class="mn"/>
<rect x="449.500" y="962.500" width="20" height="18" rx="3" fill="#666" stroke="#2e2e2e"/>
<path d="M459,972 V964" stroke="#3a7fe0" stroke-width="2"/><path d="M459,972 L452,978" stroke="#d84030" stroke-width="2"/><path d="M459,972 L466,978" stroke="#6ab020" stroke-width="2"/>
<text x="476" y="976" class="l">Global</text><use href="#ud" x="535" y="971"/>
<rect x="547.500" y="962.500" width="48" height="18" rx="3" fill="#2f2f2f" stroke="#5a5a5a"/>
<path d="M557,963V980M566.500,963V980M576,963V980M585.500,963V980M548,971.500H595" stroke="#484848"/>
<rect x="548" y="963" width="9" height="8" fill="#5f88ae"/><rect x="550" y="965" width="4" height="4" fill="#e89a3a"/>
<rect x="602.500" y="962.500" width="48" height="18" rx="3" fill="#2f2f2f" stroke="#5a5a5a"/>
<path d="M612,963V980M621.500,963V980M631,963V980M640.500,963V980M603,971.500H650" stroke="#484848"/>
<rect x="657.500" y="962.500" width="18" height="18" rx="3" fill="#5f88ae" stroke="#2e2e2e"/>
<rect x="660" y="965" width="10" height="13" fill="#d8d8d8" stroke="#555" stroke-width=".6"/><path d="M671,968 V978" stroke="#fff" stroke-width="2" stroke-dasharray="3 1"/>
<rect x="682.500" y="962.500" width="18" height="18" rx="5" class="gy"/>
<circle cx="691" cy="971" r="5" fill="none" stroke="#999" stroke-width="2"/><circle cx="691" cy="971" r="1.600" fill="#999"/>
<rect x="707.500" y="962.500" width="19" height="18" rx="3" class="gy"/>
<path d="M711,973 L717,966 Q722,965 722,970 L716,977" fill="none" stroke="#b5b5b5" stroke-width="2.500"/>
<rect x="726.500" y="962.500" width="31" height="18" class="mn"/>
<path d="M730,971H746M732,967V975M738,966V976M744,967V975" stroke="#eee"/><rect x="736.500" y="965" width="3" height="12" fill="#7ab4ff"/><use href="#ud" x="752" y="971"/>
<rect x="757.500" y="962.500" width="20" height="18" rx="3" class="gy"/>
<path d="M760,973H776M760,977H776M764,968V980M772,968V980" stroke="#eee"/><circle cx="766" cy="967" r="3" fill="#3a6fd0" stroke="#fff"/>
<rect x="783.500" y="962.500" width="40" height="18" rx="4" class="bt"/>
<path d="M803.500,963V980" stroke="#1b1b1b"/>
<use href="#cam" x="793" y="972"/><circle cx="799" cy="966" r="2.500" fill="#ffe9a0"/>
<rect x="808" y="969" width="12" height="9" fill="#333" stroke="#ddd" stroke-width=".8"/><path d="M807,967 L819,963 L820,966 L808,970Z" fill="#ddd"/>

<!-- taskbar -->
<rect x="3" y="984" width="1268" height="40" fill="#03060d"/>
<rect x="297" y="984" width="48" height="40" fill="#2e2e30"/>
<g fill="#76b9ed"><rect x="154" y="1022" width="40" height="2"/><rect x="252" y="1022" width="40" height="2"/><rect x="297" y="1022" width="48" height="2"/><rect x="350" y="1022" width="40" height="2"/></g>
<g fill="#fff"><path d="M19,999 L26,998 V1004 H19Z M27,997.800 L35,996.700 V1004 H27Z M19,1005 H26 V1011 L19,1010Z M27,1005 H35 V1012.300 L27,1011.200Z"/></g>
<circle cx="75" cy="1004" r="7" fill="none" stroke="#fff" stroke-width="2"/>
<path d="M116.500,999.500 H129.500 V1009.500 H116.500Z" fill="none" stroke="#fff" stroke-width="1.200"/>
<path d="M115,1001 H113.500 V1008 H115 M131,1001 H132.500 V1008 H131" fill="none" stroke="#fff"/>
<path d="M166,1005 L181,1005 C181,998 176,995 172,996 C166,998 164,1005 166,1008 C168,1013 176,1013 181,1010" fill="none" stroke="#0a78d6" stroke-width="3.500"/>
<path d="M212,994 H220 L222,997 H234 V1013 H212Z" fill="#f0c95c"/><rect x="212" y="999" width="22" height="14" fill="#f8dd8d"/><rect x="218" y="1006" width="10" height="7" fill="#3aa0dc"/>
<circle cx="272" cy="1004" r="11" fill="#163258"/><circle cx="276" cy="1001" r="4" fill="none" stroke="#e8eef4" stroke-width="1.600"/><path d="M262,1006 L272,1010" stroke="#e8eef4" stroke-width="3"/><circle cx="270" cy="1009" r="3" fill="#e8eef4"/>
<use href="#logo" transform="translate(321,1004) scale(1.800)"/>
<path d="M359,1011 Q358,998 370,996 Q378,996 380,1002 Q378,1006 372,1006 Q374,1012 366,1014 Q361,1014 359,1011Z" fill="#b9d3e8"/>
<circle cx="366" cy="1001" r="1.800" fill="#e44"/><circle cx="372" cy="1000" r="1.800" fill="#3c3"/><circle cx="363" cy="1006" r="1.800" fill="#36d"/>
<path d="M368,1012 L379,995" stroke="#e6a04a" stroke-width="2.500"/>
<path d="M1190,1009 L1199,999 Q1203,996 1203,1000 L1195,1010 Q1190,1012 1190,1009 M1197,1004 L1202,1008" fill="none" stroke="#e8e8e8" stroke-width="1.200"/>
<text x="1247" y="999" class="c" style='font-family:"Liberation Sans",sans-serif;font-size:12px;letter-spacing:0;fill:#f0f0f0'>21:13</text>
<text x="1219" y="1017" style='font-family:"Liberation Sans",sans-serif;font-size:12px;letter-spacing:0;fill:#f0f0f0'>08/11/201</text>
</svg>
</body></html>
